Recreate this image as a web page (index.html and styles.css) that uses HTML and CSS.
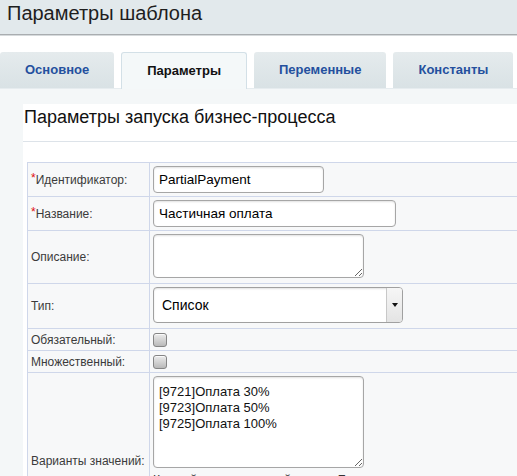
FILE: index.html
```html
<!DOCTYPE html>
<html lang="ru">
<head>
    <meta charset="UTF-8">
    <meta name="viewport" content="width=device-width, initial-scale=1.0">
    <title>Параметры шаблона</title>
    <link rel="stylesheet" href="styles.css">
</head>
<body>
    <div class="page">
        <div class="title-bar">Параметры шаблона</div>

        <div class="tabs">
            <div class="tab">Основное</div>
            <div class="tab tab-active">Параметры</div>
            <div class="tab">Переменные</div>
            <div class="tab">Константы</div>
        </div>

        <div class="tab-body">
            <div class="form-box">
                <div class="form-title">Параметры запуска бизнес-процесса</div>
                <table class="params">
                    <tr>
                        <td class="label"><span class="req">*</span>Идентификатор:</td>
                        <td class="value"><input type="text" class="input-item input-id" value="PartialPayment"></td>
                    </tr>
                    <tr>
                        <td class="label"><span class="req">*</span>Название:</td>
                        <td class="value"><input type="text" class="input-item input-name" value="Частичная оплата"></td>
                    </tr>
                    <tr>
                        <td class="label">Описание:</td>
                        <td class="value"><textarea class="area area-desc"></textarea></td>
                    </tr>
                    <tr>
                        <td class="label">Тип:</td>
                        <td class="value">
                            <div class="select-wrap">
                                <select class="select-item">
                                    <option>Список</option>
                                </select>
                            </div>
                        </td>
                    </tr>
                    <tr>
                        <td class="label">Обязательный:</td>
                        <td class="value"><input type="checkbox" class="check"></td>
                    </tr>
                    <tr>
                        <td class="label">Множественный:</td>
                        <td class="value"><input type="checkbox" class="check"></td>
                    </tr>
                    <tr class="row-variants">
                        <td class="label">Варианты значений:</td>
                        <td class="value">
                            <textarea class="area area-variants">[9721]Оплата 30%
[9723]Оплата 50%
[9725]Оплата 100%</textarea>
                            <div class="note">Каждый вариант с новой строки. Если значение варианта отличается от названия, добавьте значение в квадратных скобках в начале строки. Пример: [v1]Вариант 1</div>
                        </td>
                    </tr>
                </table>
            </div>
        </div>
    </div>
</body>
</html>
```

FILE: styles.css
```css
* {
    margin: 0;
    padding: 0;
    box-sizing: border-box;
}
html, body {
    height: 100%;
    overflow: hidden;
}
body {
    font-family: "Liberation Sans", Arial, sans-serif;
    color: #222;
    background: #fff;
}
.page {
    width: 800px;
}
.title-bar {
    height: 35px;
    padding: 0 7px;
    background-color: #e2e9ec;
    border-bottom: 1px solid #a9adb0;
    box-shadow: 0 1px 0 #d6dadc;
    font-size: 20px;
    line-height: 26px;
    color: #1e1e1e;
}
.tabs {
    display: flex;
    gap: 7px;
    height: 36px;
    margin-top: 17px;
}
.tab {
    padding: 0 25px;
    line-height: 36px;
    font-size: 13px;
    font-weight: bold;
    color: #24509e;
    background-image: linear-gradient(to bottom, #e5ebed, #d9e2e5);
    border-radius: 3px 3px 0 0;
}
.tab-active {
    color: #111;
    background: #f4f8f9;
    border: 1px solid #d3e0e7;
    border-bottom: 0;
    height: 37px;
    line-height: 35px;
    position: relative;
    z-index: 1;
}
.tab-body {
    background-color: #f4f7f8;
    border-top: 1px solid #e6ecef;
    padding: 15px 0 0 23px;
    height: 600px;
}
.form-box {
    background-color: #fff;
    height: 700px;
}
.form-title {
    font-size: 18px;
    line-height: 24px;
    padding: 1px 1px 12px;
    color: #111;
    border-bottom: 1px solid #dde3e9;
}
.params {
    margin: 20px 0 0 4px;
    width: 700px;
    border-collapse: collapse;
    background-color: #f7f8f9;
}
.params td {
    border: 1px solid #cfd7ea;
    padding: 3px;
}
.label {
    width: 122px;
    font-size: 12px;
    color: #3b3b3b;
    vertical-align: middle;
}
.req {
    color: #e01010;
    font-size: 12px;
    position: relative;
    top: -2px;
}
.value {
    vertical-align: top;
}
.input-item {
    display: block;
    height: 27px;
    padding: 0 5px;
    border: 1px solid #a6a6a6;
    border-radius: 4px;
    box-shadow: inset 0 1px 2px rgba(0, 0, 0, 0.12);
    font-family: "Liberation Sans", Arial, sans-serif;
    font-size: 13.5px;
    color: #000;
    outline: none;
}
.input-id {
    width: 171px;
}
.input-name {
    width: 243px;
}
.area {
    display: block;
    width: 211px;
    padding: 7px 5px;
    border: 1px solid #a6a6a6;
    border-radius: 4px;
    box-shadow: inset 0 1px 2px rgba(0, 0, 0, 0.12);
    font-family: "Liberation Sans", Arial, sans-serif;
    font-size: 13px;
    line-height: 16px;
    color: #111;
    outline: none;
}
.area-desc {
    height: 44px;
    margin-bottom: 2px;
}
.area-variants {
    height: 92px;
}
.select-wrap {
    position: relative;
    width: 250px;
    margin: 0 0 2px;
}
.select-item {
    display: block;
    width: 250px;
    height: 36px;
    padding: 0 20px 0 8px;
    -webkit-appearance: none;
    appearance: none;
    border: 1px solid #a0a0a0;
    border-radius: 4px;
    background: #fff;
    box-shadow: inset 0 1px 2px rgba(0, 0, 0, 0.12);
    font-family: "Liberation Sans", Arial, sans-serif;
    font-size: 14px;
    color: #000;
    outline: none;
}
.select-wrap::before {
    content: "";
    position: absolute;
    top: 1px;
    right: 1px;
    bottom: 1px;
    width: 15px;
    background-image: linear-gradient(to bottom, #f6f6f6, #e4e4e4);
    border-left: 1px solid #c8c8c8;
    border-radius: 0 3px 3px 0;
}
.select-wrap::after {
    content: "";
    position: absolute;
    top: 16px;
    right: 5px;
    border-left: 3px solid transparent;
    border-right: 3px solid transparent;
    border-top: 4px solid #111;
}
.check {
    display: block;
    width: 14px;
    height: 14px;
    margin: 1px 0 0;
    -webkit-appearance: none;
    appearance: none;
    border: 1px solid #858585;
    border-radius: 3px;
    background-image: linear-gradient(to bottom, #ececec, #b9b9b9);
    box-shadow: inset 0 1px 0 #fafafa;
}
.row-variants .value {
    height: 176px;
    padding-top: 3px;
}
.note {
    margin-top: 5px;
    font-size: 12px;
    line-height: 15px;
    color: #333;
    width: 340px;
}
```
